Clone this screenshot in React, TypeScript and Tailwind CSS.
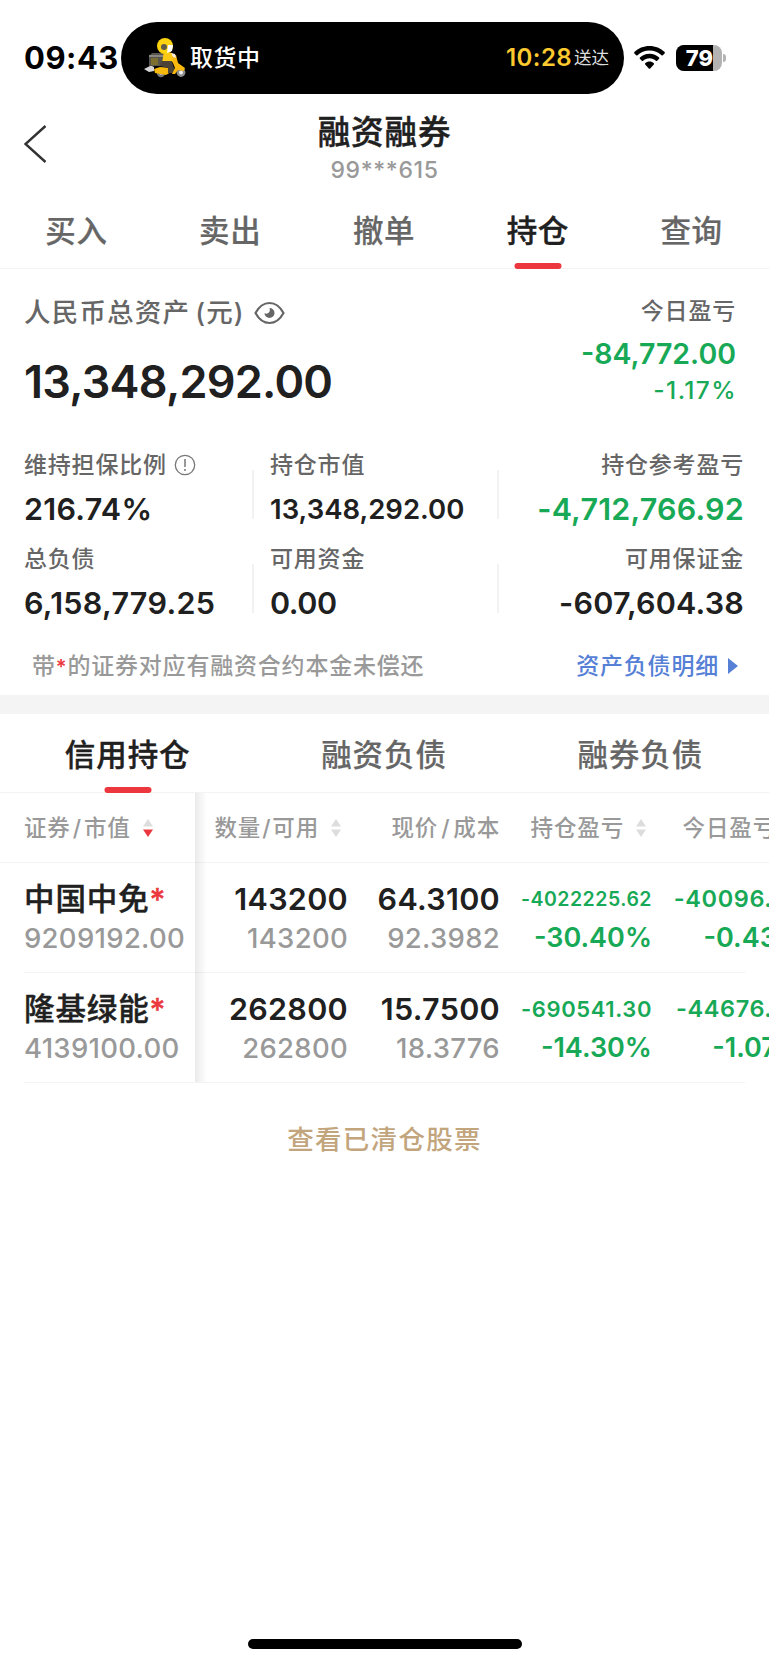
import { FC, ReactNode } from "react";
import clsx from "clsx";

const mainTabs = ["买入", "卖出", "撤单", "持仓", "查询"];
const debtTabs = ["信用持仓", "融资负债", "融券负债"];

const holdings = [
    {
        name: "中国中免",
        value: "9209192.00",
        amount: "143200",
        available: "143200",
        price: "64.3100",
        cost: "92.3982",
        profit: "-4022225.62",
        profitSize: "text-[19.5px] tracking-[0.5px]",
        profitRate: "-30.40%",
        today: "-40096.00",
        todayRate: "-0.43%",
    },
    {
        name: "隆基绿能",
        value: "4139100.00",
        amount: "262800",
        available: "262800",
        price: "15.7500",
        cost: "18.3776",
        profit: "-690541.30",
        profitSize: "text-[22px] tracking-[0.6px]",
        profitRate: "-14.30%",
        today: "-44676.00",
        todayRate: "-1.07%",
    },
];

const Rider: FC = () => (
    <svg width="42" height="40" viewBox="0 0 42 40" className="shrink-0">
        <path d="M0 31l6-3v-1l4 2v4l-5 1z" fill="#d5d5d5" />
        <path d="M5 18l3-3h13l1 3-1 10H5z" fill="#56544c" />
        <path d="M5 17h16v2H5z" fill="#8a8780" />
        <path d="M7 20h7v7H7z" fill="#7d6f2d" />
        <circle cx="17" cy="35" r="4.2" fill="#777" />
        <circle cx="17" cy="35" r="1.8" fill="#ddd" />
        <path d="M10 31l6-2 11 1v4l-5 3-11-2z" fill="#f6b80c" />
        <path d="M20 13l8 2 4 4-2 3-2 3H18z" fill="#fcc916" />
        <path d="M17 23l11 0 1 5 3 5-2 2h-6l0-5-8-2z" fill="#4b4337" />
        <circle cx="37" cy="34.500" r="4.400" fill="#8d8d8d" />
        <circle cx="37" cy="34.500" r="2" fill="#eee" />
        <path d="M28 17l4 0 2 8 7 5-1 3-6-1-3 4h-3l3-6-2-5z" fill="#fbb90e" />
        <path d="M27 15l4 1 1 4-3-1z" fill="#f4eee2" />
        <circle cx="21" cy="8" r="8" fill="#fdd20f" />
        <path d="M24 7l5 0-1 6-5 2z" fill="#fff" />
        <circle cx="20" cy="9" r="3" fill="#5f5b48" />
    </svg>
);

const Wifi: FC = () => (
    <svg width="31" height="24" viewBox="0 0 31 24" className="shrink-0">
        <path d="M15.500 0C9.600 0 4.200 2.300 .4 6.100c-.4.400-.4.900 0 1.300l1.800 1.800c.4.400.9.400 1.300 0C6.600 6.300 10.800 4.500 15.500 4.500s8.900 1.800 12 4.700c.4.400.9.400 1.300 0l1.800-1.800c.4-.4.400-.9 0-1.300C26.800 2.300 21.400 0 15.500 0z" />
        <path d="M15.500 7.800c-3.700 0-7.100 1.400-9.600 3.700-.4.400-.4.900 0 1.300l1.900 1.900c.4.400.9.400 1.300 0 1.700-1.500 3.900-2.400 6.400-2.400s4.700.9 6.400 2.400c.4.400.9.400 1.300 0l1.900-1.900c.4-.4.400-.9 0-1.300-2.500-2.300-5.900-3.700-9.600-3.700z" />
        <path d="M15.500 15.600c-1.700 0-3.200.6-4.300 1.600-.4.400-.4.900 0 1.300l3.600 3.900c.4.500 1 .5 1.400 0l3.600-3.900c.4-.4.400-.9 0-1.300-1.100-1-2.600-1.600-4.300-1.600z" />
    </svg>
);

const Eye: FC = () => (
    <svg width="31" height="24" viewBox="0 0 31 24" fill="none" className="ml-[9px] -mt-px shrink-0">
        <path d="M1.500 12C5 5.500 9.700 2 15.500 2s10.500 3.500 14 10c-3.500 6.500-8.200 10-14 10S5 18.500 1.500 12z" stroke="#666" strokeWidth="2.200" />
        <path d="M15.500 7a5 5 0 1 1-5 5c1 .8 2.500.9 3.700.1 1.600-1 2.100-3 1.300-5.100z" fill="#666" />
    </svg>
);

const Info: FC = () => (
    <svg width="22" height="22" viewBox="0 0 22 22" fill="none" stroke="#777" className="ml-[7px] shrink-0">
        <circle cx="11" cy="11" r="9.700" strokeWidth="1.300" />
        <path d="M11 5v8M11 15v2" strokeWidth="1.500" />
    </svg>
);

const Sort: FC<{ active?: boolean }> = ({ active }) => (
    <svg width="10" height="18" viewBox="0 0 10 18" className="ml-3 shrink-0">
        <path d="M5 0l5 7.500H0z" fill="#ddd" />
        <path d="M5 18l5-7.500H0z" fill={active ? "#eb373d" : "#ddd"} />
    </svg>
);

interface StatProps {
    label: string
    value: string
    right?: boolean
    icon?: ReactNode
    valueClass?: string
}

const Stat: FC<StatProps> = ({ label, value, right, icon, valueClass = "text-[30.5px] tracking-[0.3px]" }) => (
    <div className={clsx("flex flex-col", right && "items-end")}>
        <div className="flex items-center h-[30px] text-[23px] leading-[30px] font-medium tracking-[0.8px] text-[#666]">
            {label}
            {icon}
        </div>
        <div className={clsx("mt-[9px] leading-10 font-semibold", valueClass)}>{value}</div>
    </div>
);

const Divider: FC = () => <div className="mt-5 h-[49px] w-[2px] bg-[#f2f2f2]" />;

const App: FC = () => {
    return (
        <div className="w-[769px] h-[1665px] overflow-hidden flex flex-col bg-white text-[#202020] whitespace-nowrap font-['Inter','Noto_Sans_CJK_SC',sans-serif]">
            {/* status bar */}
            <div className="flex items-center h-[94px] pt-[22px] text-black shrink-0">
                <div className="w-[121px] pl-6 text-[31px] font-bold tracking-[0.5px]">09:43</div>
                <div className="w-[503px] h-[72px] rounded-full bg-black flex items-center pl-[23px] pr-[15px]">
                    <Rider />
                    <span className="ml-[4px] pt-px text-[23px] font-medium tracking-[0.5px] text-white">取货中</span>
                    <span className="ml-auto text-[24px] font-semibold tracking-[0.4px] text-[#fcc92f]">10:28</span>
                    <span className="ml-[2px] pt-px text-[17.5px] text-[#ddd]">送达</span>
                </div>
                <div className="ml-[10px]"><Wifi /></div>
                <div className="ml-[11px] relative w-[46px] h-[26px] rounded-[8px] overflow-hidden bg-[#b3b3b3]">
                    <div className="w-[37px] h-full bg-black flex items-center justify-end text-white text-[22px] font-extrabold">79</div>
                </div>
                <div className="ml-[1px] w-[3px] h-[8px] rounded-r-full bg-[#b3b3b3]" />
            </div>

            {/* title */}
            <div className="flex items-start pt-4 h-[98px] shrink-0">
                <div className="w-[150px] pl-6 pt-[15px]">
                    <svg width="23" height="38" viewBox="0 0 23 38" fill="none" stroke="#333" strokeWidth="2.400">
                        <path d="M21.500 1L1.500 19l20 18" />
                    </svg>
                </div>
                <div className="flex-1 flex flex-col items-center">
                    <h1 className="pt-[2px] text-[32.500px] leading-[42px] font-medium tracking-[0.900px] [-webkit-text-stroke:0.5px]">融资融券</h1>
                    <p className="text-[23px] leading-8 font-medium text-[#999] tracking-[0.600px]">99***615</p>
                </div>
                <div className="w-[150px]" />
            </div>

            {/* main tabs */}
            <div className="flex h-[77px] border-b border-[#f3f3f3] shrink-0">
                {mainTabs.map((tab) =>
                    <div key={tab} className={clsx("relative flex-1 flex items-center justify-center pt-px pr-px text-[30.500px] font-medium tracking-[0.600px]", tab === "持仓" ? "text-[#202020] [-webkit-text-stroke:0.4px]" : "text-[#666] [-webkit-text-stroke:0.2px]")}>
                        {tab}
                        {tab === "持仓" && <div className="absolute left-1/2 -translate-x-1/2 -bottom-px w-[47px] h-[6px] rounded-full bg-[#eb373d]" />}
                    </div>)}
            </div>

            {/* assets */}
            <div className="flex justify-between pl-6 pr-[33px] h-[181px] shrink-0">
                <div className="pt-[24px]">
                    <div className="flex items-center h-10 text-[26.500px] font-medium tracking-[1.200px] text-[#666]">
                        人民币总资产<span className="ml-[5px]">(元)</span>
                        <Eye />
                    </div>
                    <div className="mt-[19px] text-[45px] leading-[60px] font-semibold tracking-[-0.750px]">13,348,292.00</div>
                </div>
                <div className="pt-[26px] flex flex-col items-end text-[#18a957] font-semibold">
                    <div className="text-[23px] leading-[33px] font-medium tracking-[0.800px] text-[#666]">今日盈亏</div>
                    <div className="mt-[7px] text-[28.500px] leading-[37px]">-84,772.00</div>
                    <div className="mt-1 text-[24.500px] leading-[29px] font-medium tracking-[1.400px] -mr-px">-1.17%</div>
                </div>
            </div>
            <div className="grid grid-cols-[228px_18px_227px_19px_1fr] auto-rows-[94px] pl-6 pr-[25px] shrink-0">
                <Stat label="维持担保比例" value="216.74%" icon={<Info />} />
                <Divider />
                <Stat label="持仓市值" value="13,348,292.00" valueClass="text-[27.500px]" />
                <Divider />
                <Stat label="持仓参考盈亏" value="-4,712,766.92" right valueClass="text-[30.500px] tracking-[0.200px] text-[#18a957]" />
                <Stat label="总负债" value="6,158,779.25" />
                <Divider />
                <Stat label="可用资金" value="0.00" valueClass="text-[30.500px] tracking-[-0.400px]" />
                <Divider />
                <Stat label="可用保证金" value="-607,604.38" right valueClass="text-[30.500px] tracking-[0.200px]" />
            </div>
            <div className="flex items-center justify-between h-[57px] pb-px pl-8 pr-[31px] text-[23px] font-medium tracking-[0.800px] text-[#999] shrink-0">
                <div>带<span className="text-[20px] text-[#eb373d] font-semibold">*</span>的证券对应有融资合约本金未偿还</div>
                <div className="flex items-center text-[#5580d6]">
                    资产负债明细
                    <svg width="10" height="16" viewBox="0 0 10 16" className="ml-[9px]" fill="#5580d6"><path d="M0 0l10 8-10 8z" /></svg>
                </div>
            </div>

            <div className="h-[19px] bg-[#f4f4f4] shrink-0" />

            {/* debt tabs */}
            <div className="flex h-[79px] border-b border-[#f3f3f3] shrink-0">
                {debtTabs.map((tab, key) =>
                    <div key={tab} className={clsx("relative flex-1 flex items-center justify-center pt-[3px] pr-px text-[30.500px] font-medium tracking-[0.900px]", key === 0 ? "text-[#202020] [-webkit-text-stroke:0.4px]" : "text-[#666] [-webkit-text-stroke:0.2px]")}>
                        {tab}
                        {key === 0 && <div className="absolute left-1/2 -translate-x-1/2 -bottom-px w-[47px] h-[6px] rounded-full bg-[#eb373d]" />}
                    </div>)}
            </div>

            {/* holdings */}
            <div className="relative shrink-0">
                <div className="grid grid-cols-[172px_152px_152px_152px_152px] items-center h-[70px] pl-6 border-b border-[#f3f3f3] text-[22.500px] font-medium tracking-[0.850px] text-[#999]">
                    <div className="flex items-center">证券<span className="mx-[2px]">/</span>市值<Sort active /></div>
                    <div className="flex items-center justify-end pr-[7px]">数量<span className="mx-px">/</span>可用<Sort /></div>
                    <div className="text-right">现价<span className="mx-[3px]">/</span>成本</div>
                    <div className="flex items-center justify-end pr-[6px]">持仓盈亏<Sort /></div>
                    <div className="flex items-center justify-end pr-[6px]">今日盈亏<Sort /></div>
                </div>
                {holdings.map((item) =>
                    <div key={item.name} className="h-[109.500px]">
                        <div className="grid grid-cols-[172px_152px_152px_152px_152px] pl-6 pt-[14px] h-[109px] font-medium text-[27.500px] leading-[34px]">
                            <div>
                                <div className="text-[30.500px] leading-[44px] tracking-[0.900px] [-webkit-text-stroke:0.4px]">{item.name}<span className="text-[#eb373d]">*</span></div>
                                <div className="text-[#999] tracking-[0.300px]">{item.value}</div>
                            </div>
                            <div className="text-right">
                                <div className="text-[30.500px] leading-[44px] font-semibold tracking-[0.300px]">{item.amount}</div>
                                <div className="text-[#999] tracking-[0.300px]">{item.available}</div>
                            </div>
                            <div className="text-right">
                                <div className="text-[30.500px] leading-[44px] font-semibold tracking-[0.300px]">{item.price}</div>
                                <div className="text-[#999] tracking-[0.300px]">{item.cost}</div>
                            </div>
                            <div className="text-right text-[#18a957] font-semibold">
                                <div className={clsx("leading-[44px]", item.profitSize)}>{item.profit}</div>
                                <div className="text-[27px]">{item.profitRate}</div>
                            </div>
                            <div className="text-right text-[#18a957] font-semibold">
                                <div className="text-[23.500px] leading-[44px] tracking-[0.600px]">{item.today}</div>
                                <div className="text-[27px]">{item.todayRate}</div>
                            </div>
                        </div>
                        <div className="mx-6 h-px bg-[#f3f3f3]" />
                    </div>)}
                {/* edge shadow of the pinned column */}
                <div className="absolute left-[195px] top-0 bottom-0 w-[12px] bg-linear-to-r from-black/8 to-transparent" />
            </div>

            <div className="mt-[37px] text-center text-[26.500px] leading-10 font-medium tracking-[1.300px] text-[#c2a57c]">查看已清仓股票</div>

            <div className="mt-auto mb-4 mx-auto w-[274px] h-[10px] rounded-full bg-black shrink-0" />
        </div>
    );
};

export default App;
